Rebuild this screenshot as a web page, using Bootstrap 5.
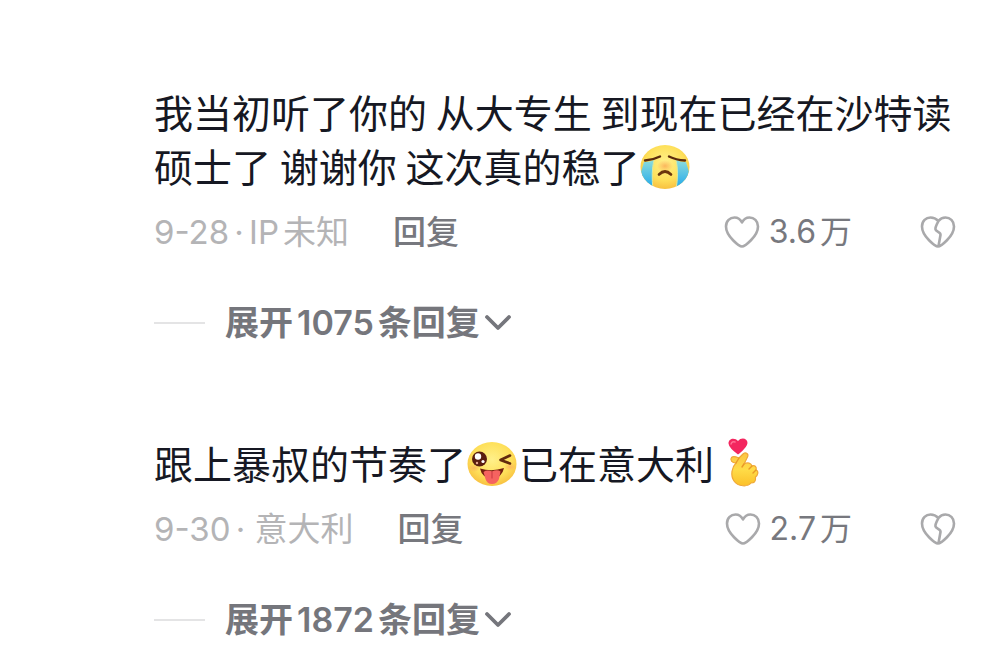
<!DOCTYPE html>
<html lang="zh-CN">
<head>
<meta charset="utf-8">
<meta name="viewport" content="width=device-width, initial-scale=1">
<title>评论</title>
<link href="https://cdn.jsdelivr.net/npm/bootstrap@5.3.0/dist/css/bootstrap.min.css" rel="stylesheet">
<style>
  body { font-family: Inter, "Noto Sans CJK SC", sans-serif; background: #fff; color: #161823; }
  .comments { padding: 84px 44px 16px 154px; }
  .comment-item + .comment-item { margin-top: 89px; }
  .comment-text { font-family: "Noto Sans CJK SC", sans-serif; font-size: 39px; line-height: 54px; }
  .emoji { width: 50px; height: 46px; vertical-align: -8px; margin: 0 2px 0 1px; }
  .emoji-hand { width: 52px; height: 52px; vertical-align: -10px; margin-left: 4px; }
  .meta-row { margin-top: 17px; height: 46px; font-size: 33px; line-height: 46px; white-space: nowrap; }
  .meta-info { color: #b4b4b6; }
  .dot { width: 20px; text-align: center; }
  .reply-btn, .icon-btn, .expand-btn { border: 0; padding: 0; background: none; color: #77787e; }
  .reply-btn { font-weight: 500; margin-left: 44px; }
  .icon-btn { color: #a9a9ab; }
  .like-btn { gap: 9px; font-size: 32px; }
  .like-num { color: #77787e; }
  .heart { width: 36px; height: 34px; }
  .dislike-btn { margin-left: 68px; }
  .expand-row { margin-top: 45px; height: 46px; font-size: 34px; line-height: 46px; white-space: nowrap; }
  .expand-line { width: 51px; height: 2px; background: #e4e4e5; margin-right: 20px; }
  .expand-btn { font-weight: 600; gap: 4px; color: #75767c; }
  .chev { width: 28px; height: 20px; }
</style>
</head>
<body>
<svg class="position-absolute" width="0" height="0" aria-hidden="true">
  <defs>
    <radialGradient id="face" cx=".5" cy=".4" r=".65"><stop offset="0" stop-color="#fff08a"/><stop offset=".6" stop-color="#fee05a"/><stop offset="1" stop-color="#f7b93a"/></radialGradient>
    <linearGradient id="tear" x2="0" y2="1"><stop offset="0" stop-color="#8ddcdc"/><stop offset="1" stop-color="#19a5ee"/></linearGradient>
    <radialGradient id="blush"><stop offset="0" stop-color="#fbb75c"/><stop offset="1" stop-color="#fbb75c" stop-opacity="0"/></radialGradient>
    <linearGradient id="hand" x2="0" y2="1"><stop offset="0" stop-color="#fbc543"/><stop offset=".5" stop-color="#ffdc48"/><stop offset="1" stop-color="#fbc02a"/></linearGradient>
    <clipPath id="faceClip"><ellipse cx="25" cy="23" rx="24.5" ry="22"/></clipPath>
    <symbol id="heart" viewBox="0 0 36 34"><path d="M18 31.500C15.500 31.500 2 21.500 2 11.500 2 6 6 2.500 10.500 2.500 14 2.500 16.500 4.500 18 7.500 19.500 4.500 22 2.500 25.500 2.500 30 2.500 34 6 34 11.500 34 21.500 20.500 31.500 18 31.500Z" fill="none" stroke="currentColor" stroke-width="2.600" stroke-linejoin="round"/></symbol>
    <symbol id="broken" viewBox="0 0 36 34"><path d="M18 31.500C15.500 31.500 2 21.500 2 11.500 2 6 6 2.500 10.500 2.500 14 2.500 16.500 4 18.500 6 20 4 22 2.500 25.500 2.500 30 2.500 34 6 34 11.500 34 21.500 20.500 31.500 18 31.500ZM18.500 6C17 9 15 12 15.500 14.500 16.500 17 21 17 20.500 20L18.500 31" fill="none" stroke="currentColor" stroke-width="2.600" stroke-linejoin="round"/></symbol>
    <symbol id="chevron" viewBox="0 0 28 20"><path d="M3 4 14 15 25 4" fill="none" stroke="currentColor" stroke-width="3.800" stroke-linecap="round" stroke-linejoin="round"/></symbol>
  </defs>
</svg>

<main class="comments">
  <article class="comment-item">
    <p class="comment-text mb-0">我当初听了你的 从大专生 到现在已经在沙特读硕士了 谢谢你 这次真的稳了<svg class="emoji" viewBox="0 0 50 46" role="img" aria-label="大哭">
      <ellipse cx="25" cy="23" rx="24.500" ry="22" fill="url(#face)"/>
      <g clip-path="url(#faceClip)">
        <path d="M4 18Q9 18.500 14 16Q11 28 13 46H3Q3 34 1 28Z" fill="url(#tear)"/>
        <path d="M46 18Q41 18.500 36 16Q39 28 36 46H47Q46 34 49 28Z" fill="url(#tear)"/>
        <path d="M14 16Q11 28 13 46M36 16Q39 28 36 46" fill="none" stroke="#d9e9a2" stroke-width="1"/>
      </g>
      <ellipse cx="25" cy="22" rx="8" ry="6" fill="url(#blush)"/>
      <path d="M5 16.500Q13 16 20 12.500M29 12.500Q36 16 45 16.500" fill="none" stroke="#5b2a0c" stroke-width="2.400" stroke-linecap="round"/>
      <path d="M19 30.500Q25 24.500 31 30.500" fill="none" stroke="#6c360d" stroke-width="2.600" stroke-linecap="round"/>
    </svg></p>
    <div class="meta-row d-flex align-items-center">
      <div class="meta-info d-flex"><span>9-28</span><span class="dot">·</span><span>IP</span><span class="ms-1">未知</span></div>
      <button type="button" class="reply-btn">回复</button>
      <button type="button" class="icon-btn like-btn d-flex align-items-center ms-auto" aria-label="赞 3.6万"><svg class="heart"><use href="#heart"/></svg><span class="like-num">3.6<span class="ms-1">万</span></span></button>
      <button type="button" class="icon-btn dislike-btn d-flex align-items-center" aria-label="踩"><svg class="heart"><use href="#broken"/></svg></button>
    </div>
    <div class="expand-row d-flex align-items-center">
      <span class="expand-line"></span>
      <button type="button" class="expand-btn d-flex align-items-center"><span>展开</span><span>1075</span><span>条回复</span><svg class="chev"><use href="#chevron"/></svg></button>
    </div>
  </article>

  <article class="comment-item">
    <p class="comment-text mb-0">跟上暴叔的节奏了<svg class="emoji" viewBox="0 0 50 46" role="img" aria-label="调皮">
      <ellipse cx="25" cy="23" rx="24.500" ry="22" fill="url(#face)"/>
      <ellipse cx="7" cy="27" rx="6" ry="4" fill="url(#blush)"/><ellipse cx="43" cy="26" rx="6" ry="4" fill="url(#blush)"/>
      <circle cx="12.500" cy="18" r="7.500" fill="#5a1d10"/>
      <circle cx="11" cy="15.500" r="3.200" fill="#fff"/><circle cx="16" cy="20.500" r="1.600" fill="#fff"/><circle cx="10" cy="22" r="1.200" fill="#e6a58f"/>
      <path d="M43 14.500 33.500 19 43 22.500" fill="none" stroke="#61290d" stroke-width="2.600" stroke-linecap="round" stroke-linejoin="round"/>
      <path d="M13 27.500Q25 31 37 27Q35 37 25 37.500 15 37 13 27.500Z" fill="#75200f"/>
      <path d="M16.500 31Q20 28.500 25 30.500 30 28 33.500 30.500L32 38Q30 43 25 43 20 43 18.500 38Z" fill="#f56360"/>
      <path d="M25 31V37" stroke="#cf3f45" stroke-width="1.200" stroke-linecap="round"/>
    </svg>已在意大利<svg class="emoji-hand" viewBox="0 0 52 52" role="img" aria-label="比心">
      <path d="M20 17.500Q11 11 10.500 6.500C10.500 1 17 .500 20 4 23 0 29.500 1 29.500 6 29 11 20 17.500 20 17.500Z" fill="#f3265f"/>
      <path d="M13 7Q14 4 17 5" fill="none" stroke="#ff6d92" stroke-width="1.500" stroke-linecap="round"/>
      <path d="M18 26C14 26 11.500 23 13.500 20.500 15.500 18.500 18.500 20 21 21L25 17C28 14.500 31 17 29.500 20L26 27C30 25 33 26 34 29 37 28 39 30 38 33 41 34 40 38 37.500 40 38 45 36 46 33 46 30 50 20 50 16 44 12 38 14 30 18 26Z" fill="url(#hand)" stroke="#f0a838" stroke-width="1.200" stroke-linejoin="round"/>
      <path d="M21 21 18 26M26 27 24 30M34 29 31 32M38 33 35 36" fill="none" stroke="#e99927" stroke-width="1.400" stroke-linecap="round"/>
    </svg></p>
    <div class="meta-row d-flex align-items-center">
      <div class="meta-info d-flex"><span>9-30</span><span class="dot">·</span><span class="ms-1">意大利</span></div>
      <button type="button" class="reply-btn">回复</button>
      <button type="button" class="icon-btn like-btn d-flex align-items-center ms-auto" aria-label="赞 2.7万"><svg class="heart"><use href="#heart"/></svg><span class="like-num">2.7<span class="ms-1">万</span></span></button>
      <button type="button" class="icon-btn dislike-btn d-flex align-items-center" aria-label="踩"><svg class="heart"><use href="#broken"/></svg></button>
    </div>
    <div class="expand-row d-flex align-items-center">
      <span class="expand-line"></span>
      <button type="button" class="expand-btn d-flex align-items-center"><span>展开</span><span>1872</span><span>条回复</span><svg class="chev"><use href="#chevron"/></svg></button>
    </div>
  </article>
</main>
<script src="https://cdn.jsdelivr.net/npm/bootstrap@5.3.0/dist/js/bootstrap.bundle.min.js"></script>
</body>
</html>
